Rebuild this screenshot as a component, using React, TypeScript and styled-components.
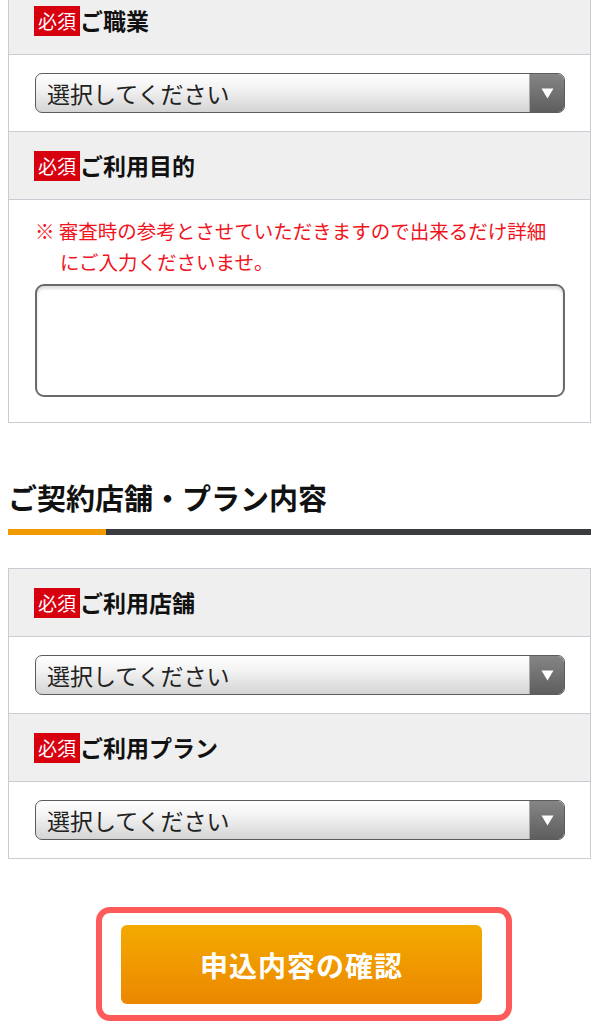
import React from 'react'
import styled, {createGlobalStyle} from 'styled-components'

const GlobalStyle = createGlobalStyle`
    body {
        margin: 0;
        background: #fff;
        font-family: "Noto Sans CJK JP", "Noto Sans", sans-serif;
        color: #111;
    }
`

const Page = styled.div`
    width: 583px;
    padding-left: 8px;
    margin-top: -14px;
    padding-bottom: 40px;
`

const Panel = styled.div`
    border: 1px solid #c8ccd3;
`

const HeaderRow = styled.div`
    display: flex;
    align-items: center;
    height: 67px;
    padding-left: 25px;
    background: #efefef;
    border-bottom: 1px solid #c8ccd3;
`

const Badge = styled.span`
    display: inline-flex;
    align-items: center;
    height: 30px;
    padding: 0 4px;
    background: #d7000f;
    color: #fff;
    font-size: 19px;
    line-height: 1;
`

const Label = styled.span`
    font-size: 23px;
    font-weight: 700;
    color: #111;
    line-height: 1;
`

const FieldRow = styled.div<{last?: boolean}>`
    padding: 18px 25px 18px 26px;
    background: #fff;
    border-bottom: ${p => p.last ? 'none' : '1px solid #c8ccd3'};
`

const SelectBox = styled.div`
    display: flex;
    height: 40px;
    border: 1px solid #5c5c5c;
    border-radius: 7px;
    overflow: hidden;
    background: linear-gradient(#ffffff, #f2f2f2 40%, #d4d4d4);
    box-sizing: border-box;
`

const SelectText = styled.span`
    flex: 1;
    display: flex;
    align-items: center;
    padding-left: 11px;
    font-size: 23px;
    color: #222;
`

const Arrow = styled.span`
    width: 34px;
    display: flex;
    align-items: center;
    justify-content: center;
    background: linear-gradient(#858585, #5e5e5e);
    border-left: 1px solid #aaa;
`

const Note = styled.p`
    margin: 0 0 7px 0;
    padding-left: 25px;
    text-indent: -25px;
    font-size: 19.5px;
    line-height: 31px;
    color: #f0141e;
`

const TextArea = styled.div`
    height: 113px;
    border: 2px solid #6a6a6a;
    border-radius: 9px;
    box-sizing: border-box;
    background: #fff;
    box-shadow: inset 0 3px 3px rgba(0, 0, 0, 0.12);
`

const NoteRow = styled.div`
    padding: 15px 25px 25px 26px;
`

const Heading = styled.h2`
    margin: 54px 0 0 0;
    font-size: 29px;
    line-height: 40px;
    font-weight: 700;
    color: #111;
`

const HeadingBar = styled.div`
    display: flex;
    height: 6px;
    margin: 12px 0 33px 0;
    background: #3a3c40;
`

const BarAccent = styled.div`
    width: 98px;
    background: #f09a00;
`

const ButtonWrap = styled.div`
    display: flex;
    justify-content: center;
    margin-top: 48px;
    padding-left: 9px;
`

const Highlight = styled.div`
    padding: 12px 24px 11px 19px;
    border: 6px solid #ff5a5a;
    border-radius: 14px;
`

const SubmitButton = styled.button`
    width: 361px;
    height: 79px;
    border: none;
    border-radius: 6px;
    background: linear-gradient(#f3aa00, #ec8700);
    color: #fff;
    font-family: "Noto Sans CJK JP", sans-serif;
    font-size: 28px;
    font-weight: 700;
    letter-spacing: 1px;
`

const Select: React.FC = () => (
    <SelectBox>
        <SelectText>選択してください</SelectText>
        <Arrow>
            <svg width="13" height="11" viewBox="0 0 13 11">
                <path d="M0.5 0.5 H12.5 L6.5 10.5 Z" fill="#fff" />
            </svg>
        </Arrow>
    </SelectBox>
)

const Header: React.FC<{label: string}> = ({label}) => (
    <HeaderRow>
        <Badge>必須</Badge>
        <Label>{label}</Label>
    </HeaderRow>
)

const App: React.FC = () => {
    return (
        <Page>
            <GlobalStyle />
            <Panel>
                <Header label="ご職業" />
                <FieldRow><Select /></FieldRow>
                <Header label="ご利用目的" />
                <NoteRow>
                    <Note>※ 審査時の参考とさせていただきますので出来るだけ詳細にご入力くださいませ。</Note>
                    <TextArea />
                </NoteRow>
            </Panel>

            <Heading>ご契約店舗・プラン内容</Heading>
            <HeadingBar><BarAccent /></HeadingBar>

            <Panel>
                <Header label="ご利用店舗" />
                <FieldRow><Select /></FieldRow>
                <Header label="ご利用プラン" />
                <FieldRow last><Select /></FieldRow>
            </Panel>

            <ButtonWrap>
                <Highlight>
                    <SubmitButton>申込内容の確認</SubmitButton>
                </Highlight>
            </ButtonWrap>
        </Page>
    )
}

export default App
